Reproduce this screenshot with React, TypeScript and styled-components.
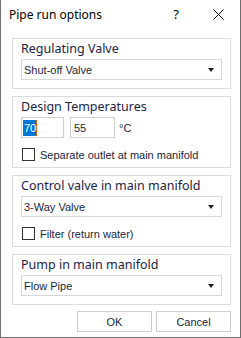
import React from 'react';
import styled, { createGlobalStyle } from 'styled-components';

const GlobalStyle = createGlobalStyle`
  html, body {
    margin: 0;
    padding: 0;
    background: #ffffff;
  }
  * {
    box-sizing: border-box;
  }
`;

const Window = styled.div`
  width: 241px;
  height: 338px;
  background: #ffffff;
  border: 1px solid #6f6f6f;
  border-top: none;
  display: flex;
  flex-direction: column;
`;

const TitleBar = styled.div`
  height: 30px;
  display: flex;
  align-items: center;
  padding-left: 8px;
  font-family: 'Noto Sans', sans-serif;
  font-size: 12px;
  color: #000000;
`;

const Title = styled.span`
  flex: 1;
  margin-top: -1px;
`;

const HelpButton = styled.span`
  width: 20px;
  margin-right: 25px;
  text-align: center;
  font-size: 13px;
  margin-top: -2px;
`;

const CloseButton = styled.span`
  width: 14px;
  height: 14px;
  margin-right: 15px;
  display: flex;
  align-items: center;
  justify-content: center;
  margin-top: -1px;
`;

const Body = styled.div`
  padding: 8px 9px 0 11px;
  display: flex;
  flex-direction: column;
  gap: 7px;
`;

const Group = styled.div<{ $bottom?: number }>`
  border: 1px solid #dcdcdc;
  padding: 0 8px ${(p) => p.$bottom ?? 8}px 8px;
  display: flex;
  flex-direction: column;
`;

const Legend = styled.div`
  font-family: 'Noto Sans', sans-serif;
  font-size: 12.5px;
  line-height: 19px;
  color: #1c2444;
  margin-bottom: 1px;
`;

const Combo = styled.div`
  height: 21px;
  border: 1px solid #d7d7d7;
  display: flex;
  align-items: center;
  padding: 0 7px 0 2px;
  font-family: 'Liberation Sans', Arial, sans-serif;
  font-size: 11px;
  color: #1a1f3d;
`;

const ComboText = styled.span`
  flex: 1;
`;

const Arrow = styled.span`
  width: 0;
  height: 0;
  border-left: 3.5px solid transparent;
  border-right: 3.5px solid transparent;
  border-top: 4px solid #222222;
  margin-top: 1px;
`;

const TempRow = styled.div`
  display: flex;
  align-items: center;
  gap: 6px;
  font-family: 'Liberation Sans', Arial, sans-serif;
  font-size: 11px;
  color: #1a1f3d;
`;

const TempInput = styled.div<{ $w: number }>`
  width: ${(p) => p.$w}px;
  height: 21px;
  border: 1px solid #cfcfcf;
  display: flex;
  align-items: center;
  padding-left: 1px;
`;

const Selected = styled.span`
  background: #0078d7;
  color: #ffffff;
  line-height: 16px;
  padding: 0 0 0 1px;
  border-right: 1px solid #e05a1a;
`;

const Value = styled.span`
  padding-left: 2px;
`;

const Unit = styled.span`
  margin-left: -2px;
  margin-top: 1px;
`;

const CheckRow = styled.label<{ $top: number }>`
  display: flex;
  align-items: center;
  gap: 5px;
  margin-top: ${(p) => p.$top}px;
  font-family: 'Liberation Sans', Arial, sans-serif;
  font-size: 11px;
  color: #1a1f3d;
`;

const Box = styled.span`
  width: 13px;
  height: 13px;
  border: 1px solid #333333;
  background: #ffffff;
  margin-left: 1px;
`;

const Footer = styled.div`
  display: flex;
  justify-content: flex-end;
  gap: 4px;
  padding: 6px 9px 0 0;
`;

const Button = styled.div`
  width: 75px;
  height: 21px;
  border: 1px solid #cccccc;
  background: #ffffff;
  display: flex;
  align-items: center;
  justify-content: center;
  font-family: 'Liberation Sans', Arial, sans-serif;
  font-size: 11px;
  color: #1a1f3d;
`;

const App = () => {
  return (
    <>
      <GlobalStyle />
      <Window>
        <TitleBar>
          <Title>Pipe run options</Title>
          <HelpButton>?</HelpButton>
          <CloseButton>
            <svg width="11" height="11" viewBox="0 0 11 11">
              <path d="M0.5 0.5 L10.5 10.5 M10.5 0.5 L0.5 10.5" stroke="#000" strokeWidth="1" />
            </svg>
          </CloseButton>
        </TitleBar>
        <Body>
          <Group>
            <Legend>Regulating Valve</Legend>
            <Combo>
              <ComboText>Shut-off Valve</ComboText>
              <Arrow />
            </Combo>
          </Group>
          <Group $bottom={6}>
            <Legend>Design Temperatures</Legend>
            <TempRow>
              <TempInput $w={43}>
                <Selected>70</Selected>
              </TempInput>
              <TempInput $w={45}>
                <Value>55</Value>
              </TempInput>
              <Unit>°C</Unit>
            </TempRow>
            <CheckRow $top={10}>
              <Box />
              Separate outlet at main manifold
            </CheckRow>
          </Group>
          <Group $bottom={6}>
            <Legend>Control valve in main manifold</Legend>
            <Combo>
              <ComboText>3-Way Valve</ComboText>
              <Arrow />
            </Combo>
            <CheckRow $top={10}>
              <Box />
              Filter (return water)
            </CheckRow>
          </Group>
          <Group>
            <Legend>Pump in main manifold</Legend>
            <Combo>
              <ComboText>Flow Pipe</ComboText>
              <Arrow />
            </Combo>
          </Group>
        </Body>
        <Footer>
          <Button>OK</Button>
          <Button>Cancel</Button>
        </Footer>
      </Window>
    </>
  );
};

export default App;
